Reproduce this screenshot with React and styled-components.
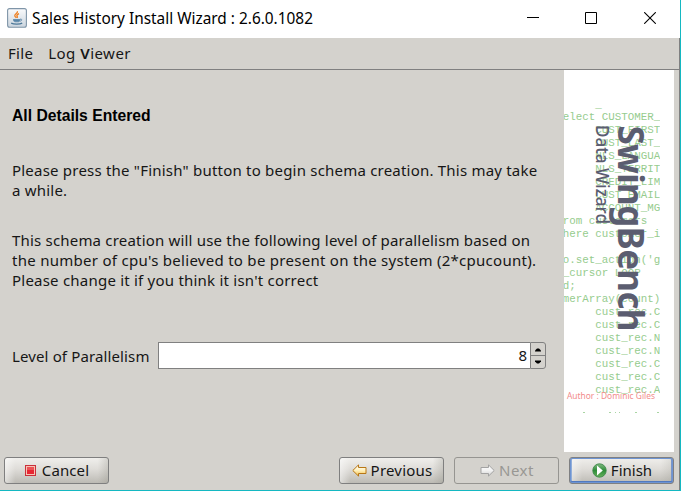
import React from "react";
import styled, { createGlobalStyle, css } from "styled-components";

const Global = createGlobalStyle`
  * { box-sizing: border-box; }
  body { margin: 0; background: #d4d2cd; }
`;

const Window = styled.div`
  width: 681px;
  height: 491px;
  display: flex;
  flex-direction: column;
  overflow: hidden;
  background: #d4d2cd;
  border-right: 1px solid #14b8c2;
  border-bottom: 1px solid #14b8c2;
  font-family: "Noto Sans", "Open Sans", sans-serif;
  font-size: 15px;
  color: #161616;
`;

const TitleBar = styled.header`
  flex: 0 0 38px;
  display: flex;
  align-items: center;
  padding: 0 0 2px 7px;
  background: #fff;
`;

const Title = styled.h1`
  flex: 1;
  margin: 0 0 0 5px;
  font-size: 15.4px;
  font-weight: 400;
  color: #000;
  white-space: nowrap;
`;

const Controls = styled.div`
  display: flex;
  gap: 46px;
  padding-right: 24px;

  svg:last-child {
    margin-left: 1px;
  }
`;

const Frame = styled.div`
  flex: 1;
  min-height: 0;
  display: flex;
  flex-direction: column;
  border-right: 1px solid #808080;
`;

const MenuBar = styled.nav`
  flex: 0 0 32px;
  display: flex;
  align-items: center;
  gap: 15px;
  padding: 0 0 2px 8px;
  border-bottom: 1px solid #808080;
`;

const MenuItem = styled.span`
  white-space: pre;
  line-height: 20px;
  letter-spacing: ${(p) => p.$track}px;
`;

const Strong = styled.b`
  font-weight: 600;
`;

const Body = styled.main`
  flex: 0 0 382px;
  display: flex;
  justify-content: space-between;
  padding-right: 5px;
`;

const Content = styled.section`
  width: 546px;
  padding: 36px 0 0 12px;
`;

const Heading = styled.h2`
  margin: 0 0 34px;
  font: bold 15.7px/20px "Liberation Sans", Arial, sans-serif;
  color: #000;
`;

const Paragraph = styled.p`
  margin: 0 0 30px;
`;

const Line = styled.span`
  display: block;
  height: 20px;
  line-height: 20px;
  white-space: nowrap;
  letter-spacing: ${(p) => p.$track}px;
`;

const Field = styled.div`
  display: flex;
  align-items: center;
  margin-top: 52px;
  height: 27px;
`;

const Label = styled.label`
  width: 146px;
  white-space: nowrap;
  letter-spacing: 0.13px;
`;

const Value = styled.div`
  flex: 1;
  height: 27px;
  padding-right: 3px;
  border: 1px solid #808080;
  border-right: 0;
  background: #fff;
  text-align: right;
  line-height: 25px;
`;

const Stepper = styled.div`
  width: 16px;
  height: 27px;
  display: grid;
  grid-template-rows: 12px 13px;
  border: 1px solid #808080;
  border-radius: 0 3px 3px 0;
`;

const Step = styled.div`
  display: flex;
  align-items: center;
  justify-content: center;
  padding-top: ${(p) => (p.$divided ? "0" : "2px")};
  border-top: ${(p) => (p.$divided ? "1px solid #808080" : "0")};
`;

const Banner = styled.aside`
  width: 110px;
  height: 382px;
  background: #fff;
`;

const Footer = styled.footer`
  display: flex;
  align-items: center;
  gap: 10px;
  padding: 5px 5px 0 4px;
`;

const Spacer = styled.div`
  flex: 1;
`;

const variants = {
  normal: css`
    border: 1px solid #7f7f7f;
    background:
      linear-gradient(90deg, rgba(255, 255, 255, 0.5), transparent 10%, transparent 90%, rgba(140, 140, 130, 0.28)),
      linear-gradient(#f0efec, #dedcd8 45%, #bcbab4);
  `,
  disabled: css`
    border: 1px solid #969591;
    color: #989793;
    background: transparent;
  `,
  focused: css`
    border: 1px solid #7f8082;
    box-shadow: inset 0 0 0 1px #6e94d2, inset 0 -2px 0 #5079c0, inset 2px 0 0 #91aeda, inset -2px 0 0 #7896cb;
    background:
      linear-gradient(90deg, rgba(255, 255, 255, 0.5), transparent 12%, transparent 88%, rgba(140, 140, 130, 0.2)),
      linear-gradient(#f0efec, #dedcd8 45%, #bcbab4);
  `,
};

const Button = styled.button`
  width: 105px;
  height: 27px;
  display: flex;
  align-items: center;
  justify-content: center;
  gap: ${(p) => p.$gap || 5}px;
  padding: 0 0 0 1px;
  border-radius: 3px;
  font: inherit;
  color: #161616;
  white-space: nowrap;
  ${(p) => variants[p.$variant || "normal"]}
`;

const Caption = styled.span`
  height: 24px;
  line-height: 22px;
  letter-spacing: ${(p) => p.$track || 0}px;
`;

function JavaIcon() {
  return (
    <svg width="20" height="20" viewBox="0 0 20 20">
      <defs>
        <linearGradient id="tile" x1="0" y1="0" x2="0" y2="1">
          <stop offset="0" stopColor="#fafbfc" />
          <stop offset="1" stopColor="#cbd5de" />
        </linearGradient>
      </defs>
      <rect x=".6" y=".6" width="18.8" height="18.6" rx="2" fill="url(#tile)" stroke="#7f95a8" strokeWidth="1.1" />
      <path d="M10.4 3.2c.8 2-3.2 3-2.6 4.7.2.8 1.2 1.4 1.5 2M12 5.7c-1.3.6-2.5 1.4-2 2.4.4.7.6 1 .2 1.8" fill="none" stroke="#ef7d1c" strokeWidth="1.3" />
      <path d="M6 11h7.2c-.1 2-.9 3-1.8 3.2H8c-1.2-.3-1.8-1.2-2-3.2z" fill="#6b94b3" />
      <path d="M6.6 12.4h6M13 11.2c2.6-.5 2.2 1.8-.4 2" fill="none" stroke="#5682a4" strokeWidth=".9" />
      <path d="M4.2 15.1c2.6 1.4 8.6 1.3 11 0" fill="none" stroke="#4d7898" strokeWidth="1.3" />
    </svg>
  );
}

function StopIcon() {
  return (
    <svg width="11" height="11" viewBox="0 0 11 11">
      <rect x=".5" y=".5" width="10" height="10" fill="#f6c3b5" stroke="#c9303a" />
      <rect x="2" y="2" width="7" height="7" fill="#e62632" />
      <path d="M2 2h7v3H2z" fill="#ec5356" />
    </svg>
  );
}

function ArrowIcon({ forward }) {
  return (
    <svg width="15" height="13" viewBox="0 0 15 13">
      <defs>
        <linearGradient id={forward ? "silver" : "gold"} x1="0" y1="0" x2="0" y2="1">
          <stop offset="0" stopColor="#fff" />
          <stop offset=".5" stopColor={forward ? "#f2f2f2" : "#fff0bb"} />
          <stop offset="1" stopColor={forward ? "#d2d2d2" : "#f3bd45"} />
        </linearGradient>
      </defs>
      <path
        d="M.8 6.5 6.5.9V3.5H14V9.5H6.5V12.1z"
        transform={forward ? "translate(15 0) scale(-1 1)" : undefined}
        fill={forward ? "url(#silver)" : "url(#gold)"}
        stroke={forward ? "#a3a3a3" : "#b87715"}
        strokeLinejoin="round"
      />
    </svg>
  );
}

function PlayIcon() {
  return (
    <svg width="15" height="15" viewBox="0 0 15 15">
      <defs>
        <linearGradient id="green" x1="0" y1="0" x2="0" y2="1">
          <stop offset="0" stopColor="#82b982" />
          <stop offset=".5" stopColor="#2f8d39" />
          <stop offset="1" stopColor="#67b15c" />
        </linearGradient>
      </defs>
      <circle cx="7.5" cy="7.5" r="6.7" fill="url(#green)" stroke="#3f8a4c" strokeWidth=".9" />
      <path d="M5 2.6v9.8l5.8-4.9z" fill="#fff" />
    </svg>
  );
}

function StepArrow({ down }) {
  return (
    <svg width="6" height="4" viewBox="0 0 6 4">
      <path d={down ? "M0 .5h6v1L4 3.5H2L0 1.5z" : "M2 .5h2l2 2v1H0v-1z"} fill="#000" />
    </svg>
  );
}

const listing = [
  [5, "_", 107.5],
  [0, "elect CUSTOMER_", 120],
  [5, "CUST_FIRST", 133],
  [5, "CUST_LAST_", 146],
  [5, "NLS_LANGUA", 159],
  [5, "NLS_TERRIT", 172],
  [5, "CREDIT_LIM", 185],
  [5, "CUST_EMAIL", 198],
  [5, "ACCOUNT_MG", 211],
  [0, "rom customers", 224],
  [0, "here customer_i", 237],
  [0, "o.set_action('g", 263],
  [0, "_cursor LOOP", 276],
  [0, "d;", 289],
  [0, "merArray(count)", 302],
  [5, "cust_rec.C", 315],
  [5, "cust_rec.C", 328],
  [5, "cust_rec.N", 341],
  [5, "cust_rec.N", 354],
  [5, "cust_rec.C", 367],
  [5, "cust_rec.C", 380],
  [5, "cust_rec.A", 393],
];

function BannerArt() {
  return (
    <svg width="110" height="382" viewBox="564 70 110 382" display="block">
      <clipPath id="code">
        <rect x="564" y="100" width="96" height="320" />
      </clipPath>
      <g clipPath="url(#code)" fill="#96cc8e" fontFamily="Liberation Mono, monospace" fontSize="10.83">
        {listing.map(([col, text, y]) => (
          <text key={y} x={562.7 + col * 6.5} y={y} xmlSpace="preserve">
            {text}
          </text>
        ))}
      </g>
      <path d="M583 412.5h2M609 412.5h2M615 412.5h1M619 412.5h1M635 412.5h2M657 412.5h2" stroke="#a9d5a3" />
      <g fill="#5b5d70" fontFamily="Noto Sans, sans-serif">
        <text transform="translate(617.5 125.5) rotate(90)" fontSize="35" fontWeight="700" textLength="206" lengthAdjust="spacing">
          SwingBench
        </text>
        <text transform="translate(595.5 125) rotate(90)" fontSize="17.5" fontWeight="500" textLength="99" lengthAdjust="spacingAndGlyphs">
          Data Wizard
        </text>
      </g>
      <text x="567" y="398.5" fill="#f28c8c" fontFamily="Noto Sans, sans-serif" fontSize="8.5" textLength="88" lengthAdjust="spacingAndGlyphs">
        Author : Dominic Giles
      </text>
    </svg>
  );
}

export default function App() {
  return (
    <>
      <Global />
      <Window>
        <TitleBar>
          <JavaIcon />
          <Title>Sales History Install Wizard : 2.6.0.1082</Title>
          <Controls>
            <svg width="12" height="12"><path d="M0 5.5h12" stroke="#000" /></svg>
            <svg width="12" height="12"><path d="M.5.5h11v11H.5z" fill="none" stroke="#000" /></svg>
            <svg width="12" height="12"><path d="M.2.2l11.6 11.6M11.8.2L.2 11.8" stroke="#000" strokeWidth="1.1" /></svg>
          </Controls>
        </TitleBar>
        <Frame>
          <MenuBar>
            <MenuItem $track={0.3}>File</MenuItem>
            <MenuItem $track={0.48}>Log <Strong>V</Strong>iewer</MenuItem>
          </MenuBar>
          <Body>
            <Content>
              <Heading>All Details Entered</Heading>
              <Paragraph>
                <Line $track={0.21}>Please press the "Finish" button to begin schema creation. This may take</Line>
                <Line $track={0.21}>a while.</Line>
              </Paragraph>
              <Paragraph>
                <Line $track={0.19}>This schema creation will use the following level of parallelism based on</Line>
                <Line $track={0.28}>the number of cpu's believed to be present on the system (2*cpucount).</Line>
                <Line $track={0.22}>Please change it if you think it isn't correct</Line>
              </Paragraph>
              <Field>
                <Label>Level of Parallelism</Label>
                <Value>8</Value>
                <Stepper>
                  <Step><StepArrow /></Step>
                  <Step $divided><StepArrow down /></Step>
                </Stepper>
              </Field>
            </Content>
            <Banner><BannerArt /></Banner>
          </Body>
          <Footer>
            <Button $gap={6}><StopIcon /><Caption $track={0.1}>Cancel</Caption></Button>
            <Spacer />
            <Button $gap={4}><ArrowIcon /><Caption $track={0.2}>Previous</Caption></Button>
            <Button $variant="disabled" $gap={4} disabled><ArrowIcon forward /><Caption $track={0.5}>Next</Caption></Button>
            <Button $variant="focused" $gap={4}><PlayIcon /><Caption>Finish</Caption></Button>
          </Footer>
        </Frame>
      </Window>
    </>
  );
}
